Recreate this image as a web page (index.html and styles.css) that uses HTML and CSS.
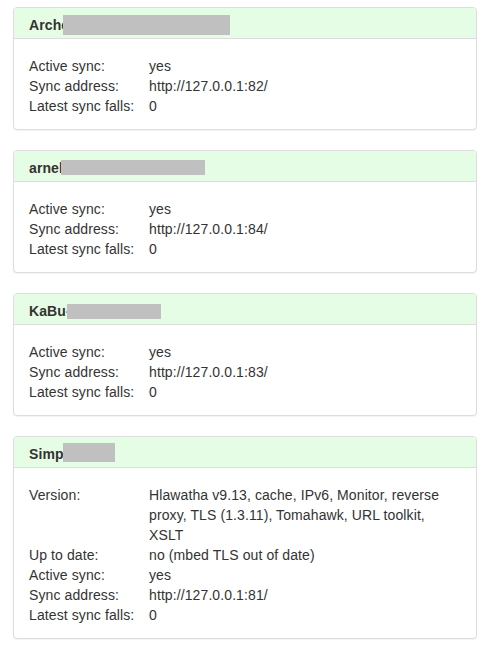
FILE: index.html
```html
<!DOCTYPE html>
<html>
<head>
<meta charset="utf-8">
<link rel="stylesheet" href="styles.css">
</head>
<body>
<div class="panel">
  <div class="panel-heading">Arche<span class="redact r1"></span></div>
  <div class="panel-body">
    <table class="info">
      <tr><td class="label">Active sync:</td><td>yes</td></tr>
      <tr><td class="label">Sync address:</td><td>http://127.0.0.1:82/</td></tr>
      <tr><td class="label">Latest sync falls:</td><td>0</td></tr>
    </table>
  </div>
</div>
<div class="panel">
  <div class="panel-heading">arnel<span class="redact r2"></span></div>
  <div class="panel-body">
    <table class="info">
      <tr><td class="label">Active sync:</td><td>yes</td></tr>
      <tr><td class="label">Sync address:</td><td>http://127.0.0.1:84/</td></tr>
      <tr><td class="label">Latest sync falls:</td><td>0</td></tr>
    </table>
  </div>
</div>
<div class="panel">
  <div class="panel-heading">KaBu-<span class="redact r3"></span></div>
  <div class="panel-body">
    <table class="info">
      <tr><td class="label">Active sync:</td><td>yes</td></tr>
      <tr><td class="label">Sync address:</td><td>http://127.0.0.1:83/</td></tr>
      <tr><td class="label">Latest sync falls:</td><td>0</td></tr>
    </table>
  </div>
</div>
<div class="panel">
  <div class="panel-heading">Simp<span class="redact r4"></span></div>
  <div class="panel-body">
    <table class="info">
      <tr><td class="label">Version:</td><td>Hlawatha v9.13, cache, IPv6, Monitor, reverse proxy, TLS (1.3.11), Tomahawk, URL toolkit, XSLT</td></tr>
      <tr><td class="label">Up to date:</td><td>no (mbed TLS out of date)</td></tr>
      <tr><td class="label">Active sync:</td><td>yes</td></tr>
      <tr><td class="label">Sync address:</td><td>http://127.0.0.1:81/</td></tr>
      <tr><td class="label">Latest sync falls:</td><td>0</td></tr>
    </table>
  </div>
</div>
</body>
</html>
```
FILE: styles.css
```css
html, body {
  margin: 0;
  background: #fff;
}
body {
  padding: 7px 13px 0 13px;
  font-family: "Liberation Sans", Arial, sans-serif;
  font-size: 14px;
  line-height: 20px;
  letter-spacing: 0.1px;
  color: #333;
}
.panel {
  border: 1px solid #ddd;
  border-radius: 4px;
  background: #fff;
  box-shadow: 0 1px 1px rgba(0,0,0,0.05);
  margin-bottom: 20px;
}
.panel-heading {
  position: relative;
  background: #e5fde5;
  border-bottom: 1px solid #ddd;
  border-radius: 3px 3px 0 0;
  padding: 7px 15px 3px 15px;
  font-weight: bold;
}
.redact {
  position: absolute;
  background: #c0c0c0;
}
.r1 { left: 49px; top: 7px; width: 167px; height: 20px; }
.r2 { left: 47px; top: 9px; width: 144px; height: 15px; }
.r3 { left: 53px; top: 10px; width: 94px; height: 15px; }
.r4 { left: 49px; top: 6px; width: 52px; height: 19px; }
.panel-body {
  padding: 17px 15px 13px 15px;
}
.info {
  border-collapse: collapse;
  width: 100%;
}
.info td {
  padding: 0;
  vertical-align: top;
}
.info td.label {
  width: 120px;
  white-space: nowrap;
}
```
